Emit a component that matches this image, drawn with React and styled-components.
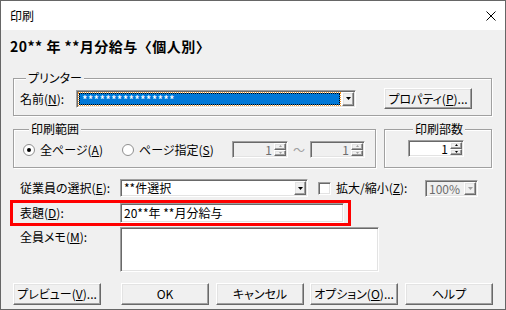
import styled, { createGlobalStyle } from "styled-components";

const GlobalStyle = createGlobalStyle`
  html, body {
    margin: 0;
    padding: 0;
    background: #fff;
  }
  body {
    font-family: "Noto Sans CJK JP", "Noto Sans", sans-serif;
    font-size: 12px;
    color: #000;
  }
  * {
    box-sizing: border-box;
  }
`;

// 3D edges like the classic Win32 controls
const sunken = `
  border-top: 1px solid #a0a0a0;
  border-left: 1px solid #a0a0a0;
  border-bottom: 1px solid #fff;
  border-right: 1px solid #fff;
  box-shadow: inset 1px 1px 0 #696969, inset -1px -1px 0 #e3e3e3;
`;

const raised = `
  border-top: 1px solid #fff;
  border-left: 1px solid #fff;
  border-bottom: 1px solid #696969;
  border-right: 1px solid #696969;
  box-shadow: inset -1px -1px 0 #a0a0a0, inset 1px 1px 0 #e3e3e3;
`;

const Window = styled.div`
  width: 506px;
  height: 310px;
  border: 1px solid #666;
  background: #f0f0f0;
  display: flex;
  flex-direction: column;
  font-feature-settings: "palt";
  overflow: hidden;
`;

const TitleBar = styled.div`
  height: 29px;
  flex: none;
  background: #fff;
  display: flex;
  align-items: center;
  justify-content: space-between;
  padding: 0 9px;
  line-height: 14px;
`;

const Body = styled.div`
  flex: 1;
  display: flex;
  flex-direction: column;
  padding: 0 11px 0 9px;
`;

const Heading = styled.div`
  margin-top: 7px;
  font-size: 14px;
  font-weight: bold;
  line-height: 18px;
  letter-spacing: 0.5px;
  font-feature-settings: normal;
`;

const Group = styled.fieldset`
  margin: ${(p) => p.$margin || "0"};
  padding: ${(p) => p.$pad};
  width: ${(p) => p.$w}px;
  min-width: 0;
  border: 1px solid #a0a0a0;
  box-shadow: inset 1px 1px 0 #fff, 1px 1px 0 #fff;
`;

const Legend = styled.legend`
  margin-left: ${(p) => p.$ml || 6}px;
  padding: 0 2px;
  line-height: 14px;
  background: #f0f0f0;
`;

const Row = styled.div`
  display: flex;
  align-items: ${(p) => p.$align || "center"};
  margin-top: ${(p) => p.$mt || 0}px;
  padding-left: ${(p) => p.$pl || 0}px;
`;

const GroupRow = styled.div`
  display: flex;
  gap: 8px;
  margin: 6px 0 0 3px;
`;

const Label = styled.span`
  width: ${(p) => p.$w}px;
  flex: none;
  line-height: 14px;
  padding-top: ${(p) => p.$pt || 0}px;
`;

const Key = styled.span`
  text-decoration: underline;
  text-underline-offset: 1px;
`;

const Combo = styled.div`
  width: ${(p) => p.$w}px;
  height: ${(p) => p.$h || 18}px;
  flex: none;
  display: flex;
  padding: 1px;
  margin-left: ${(p) => p.$ml || 0}px;
  background: ${(p) => (p.$disabled ? "#f0f0f0" : "#fff")};
  color: ${(p) => (p.$disabled ? "#6d6d6d" : "#000")};
  ${sunken}
`;

const ComboText = styled.div`
  flex: 1;
  padding-left: 2px;
  line-height: 14px;
`;

const Selection = styled.div`
  flex: 1;
  margin: 1px 2px 1px 1px;
  background: #0078d7;
  color: #fff;
  line-height: 12px;
  padding-left: 2px;
  outline: 1px dotted #f7941d;
  outline-offset: 0;
  border: 1px dotted #000;
  letter-spacing: 0.2px;
`;

const DropButton = styled.div`
  width: 12px;
  flex: none;
  display: flex;
  align-items: center;
  justify-content: center;
  background: #f0f0f0;
  ${raised}
`;

const Arrow = ({ up, color = "#000" }) => (
  <svg width="5" height="3" viewBox="0 0 5 3">
    <polygon points={up ? "2.5,0 5,3 0,3" : "0,0 5,0 2.5,3"} fill={color} />
  </svg>
);

const Button = styled.div`
  width: 88px;
  height: ${(p) => p.$h || 22}px;
  flex: none;
  margin-left: ${(p) => p.$ml || 0}px;
  display: flex;
  align-items: center;
  justify-content: center;
  line-height: 14px;
  background: #f0f0f0;
  ${raised}
`;

const RadioItem = styled.div`
  width: ${(p) => p.$w}px;
  flex: none;
  display: flex;
  align-items: center;
  gap: 5px;
  line-height: 14px;
`;

const RadioCircle = styled.span`
  width: 12px;
  height: 12px;
  flex: none;
  border-radius: 50%;
  background: #fff;
  border: 1px solid #8f8f8f;
  display: flex;
  align-items: center;
  justify-content: center;

  &::after {
    content: "";
    width: 4px;
    height: 4px;
    border-radius: 50%;
    background: ${(p) => (p.$checked ? "#000" : "transparent")};
  }
`;

const SpinBox = styled.div`
  width: ${(p) => p.$w}px;
  height: 17px;
  flex: none;
  display: flex;
  padding: 1px;
  background: ${(p) => (p.$disabled ? "#f0f0f0" : "#fff")};
  color: ${(p) => (p.$disabled ? "#6d6d6d" : "#000")};
  ${sunken}
`;

const SpinValue = styled.div`
  flex: 1;
  text-align: right;
  padding-right: 2px;
  line-height: 13px;
`;

const SpinButtons = styled.div`
  width: 12px;
  flex: none;
  display: flex;
  flex-direction: column;
`;

const SpinButton = styled.div`
  flex: 1;
  display: flex;
  align-items: center;
  justify-content: center;
  background: #f0f0f0;
  ${raised}

  svg {
    width: 3px;
    height: 2px;
  }
`;

const Tilde = styled.span`
  width: 22px;
  flex: none;
  text-align: center;
  color: #a0a0a0;
  line-height: 14px;
`;

const CheckBox = styled.span`
  width: 13px;
  height: 13px;
  flex: none;
  margin: 0 5px 0 10px;
  background: #fff;
  ${sunken}
`;

const TitleRow = styled.div`
  display: flex;
  align-items: center;
  width: 341px;
  height: 26px;
  margin-top: 3px;
  padding: 0 3px 0 7px;
  border: 3px solid #ff0000;
`;

const TextField = styled.div`
  width: ${(p) => p.$w}px;
  height: ${(p) => p.$h}px;
  flex: none;
  padding: 2px 3px;
  line-height: 14px;
  background: #fff;
  ${sunken}
`;

const ButtonBar = styled.div`
  display: flex;
  margin: 11px 0 0 3px;
`;

const Spin = ({ w, value, disabled }) => (
  <SpinBox $w={w} $disabled={disabled}>
    <SpinValue>{value}</SpinValue>
    <SpinButtons>
      <SpinButton>
        <Arrow up color={disabled ? "#a0a0a0" : "#000"} />
      </SpinButton>
      <SpinButton>
        <Arrow color={disabled ? "#a0a0a0" : "#000"} />
      </SpinButton>
    </SpinButtons>
  </SpinBox>
);

export default function App() {
  return (
    <>
      <GlobalStyle />
      <Window>
        <TitleBar>
          <span>印刷</span>
          <svg width="10" height="10" viewBox="0 0 10 10">
            <path d="M0.5 0.5 L9.5 9.5 M9.5 0.5 L0.5 9.5" stroke="#000" strokeWidth="1" />
          </svg>
        </TitleBar>
        <Body>
          <Heading>20** 年 **月分給与〈個人別〉</Heading>

          <Group $w={479} $margin="16px 0 0 3px" $pad="3px 0 6px 6px">
            <Legend>プリンター</Legend>
            <Row>
              <Label $w={56}>
                名前(<Key>N</Key>):
              </Label>
              <Combo $w={280}>
                <Selection>****************</Selection>
                <DropButton>
                  <Arrow />
                </DropButton>
              </Combo>
              <Button $ml={28} $h={21}>
                プロパティ(<Key>P</Key>)...
              </Button>
            </Row>
          </Group>

          <GroupRow>
            <Group $w={363} $pad="5px 0 9px 9px">
              <Legend>印刷範囲</Legend>
              <Row>
                <RadioItem $w={99}>
                  <RadioCircle $checked />
                  <span>
                    全ページ(<Key>A</Key>)
                  </span>
                </RadioItem>
                <RadioItem $w={110}>
                  <RadioCircle />
                  <span>
                    ページ指定(<Key>S</Key>)
                  </span>
                </RadioItem>
                <Spin w={56} value="1" disabled />
                <Tilde>～</Tilde>
                <Spin w={55} value="1" disabled />
              </Row>
            </Group>
            <Group $w={108} $pad="4px 0 9px 23px">
              <Legend $ml={5}>印刷部数</Legend>
              <Row>
                <Spin w={56} value="1" />
              </Row>
            </Group>
          </GroupRow>

          <Row $mt={11} $pl={10}>
            <Label $w={100}>
              従業員の選択(<Key>E</Key>):
            </Label>
            <Combo $w={188}>
              <ComboText>**件選択</ComboText>
              <DropButton>
                <Arrow />
              </DropButton>
            </Combo>
            <CheckBox />
            <Label $w={89}>
              拡大/縮小(<Key>Z</Key>):
            </Label>
            <Combo $w={53} $h={17} $disabled>
              <ComboText>100%</ComboText>
              <DropButton>
                <Arrow color="#a0a0a0" />
              </DropButton>
            </Combo>
          </Row>

          <TitleRow>
            <Label $w={100}>
              表題(<Key>D</Key>):
            </Label>
            <TextField $w={224} $h={20}>
              20**年 **月分給与
            </TextField>
          </TitleRow>

          <Row $mt={1} $pl={10} $align="flex-start">
            <Label $w={100} $pt={3}>
              全員メモ(<Key>M</Key>):
            </Label>
            <TextField $w={259} $h={45} />
          </Row>

          <ButtonBar>
            <Button>
              プレビュー(<Key>V</Key>)...
            </Button>
            <Button $ml={20}>OK</Button>
            <Button $ml={7}>キャンセル</Button>
            <Button $ml={6}>
              オプション(<Key>O</Key>)...
            </Button>
            <Button $ml={7}>ヘルプ</Button>
          </ButtonBar>
        </Body>
      </Window>
    </>
  );
}
